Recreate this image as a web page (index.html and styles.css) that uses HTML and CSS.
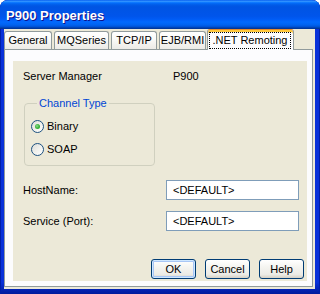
FILE: index.html
```html
<!DOCTYPE html>
<html>
<head>
<meta charset="utf-8">
<link rel="stylesheet" href="styles.css">
</head>
<body>
<div class="window">
  <div class="titlebar"><span class="title">P900 Properties</span></div>
  <div class="body">
    <div class="tabs">
      <div class="tab t-general">General</div>
      <div class="tab t-mq">MQSeries</div>
      <div class="tab t-tcp">TCP/IP</div>
      <div class="tab t-ejb">EJB/RMI</div>
      <div class="tab tab-active"><span class="focus">.NET Remoting</span></div>
    </div>
    <div class="page">
      <div class="inner">
        <div class="row-info">
          <span class="info-label">Server Manager</span>
          <span class="info-value">P900</span>
        </div>
        <fieldset class="group">
          <legend class="legend">Channel Type</legend>
          <div class="radio-row"><span class="radio checked"></span><span>Binary</span></div>
          <div class="radio-row second"><span class="radio"></span><span>SOAP</span></div>
        </fieldset>
        <div class="field-row host">
          <span class="field-label">HostName:</span>
          <div class="textbox">&lt;DEFAULT&gt;</div>
        </div>
        <div class="field-row port">
          <span class="field-label">Service (Port):</span>
          <div class="textbox">&lt;DEFAULT&gt;</div>
        </div>
        <div class="buttons">
          <div class="btn btn-default">OK</div>
          <div class="btn">Cancel</div>
          <div class="btn">Help</div>
        </div>
      </div>
    </div>
  </div>
</div>
</body>
</html>
```
FILE: styles.css
```css
* { box-sizing: border-box; }
html, body { margin: 0; padding: 0; }
body {
  width: 320px;
  height: 294px;
  overflow: hidden;
  font-family: "Liberation Sans", Arial, sans-serif;
  font-size: 11px;
  color: #000;
  background: #fff;
}
.window {
  width: 320px;
  height: 294px;
  display: flex;
  flex-direction: column;
  background: linear-gradient(to bottom, #0831D9 0%, #0831D9 96%, #001B9C 100%);
  box-shadow: inset 1px 0 #001EA8, inset -1px 0 #001EA8;
  border-radius: 8px 8px 0 0;
  overflow: hidden;
}
.titlebar {
  height: 29px;
  flex: none;
  padding: 1px 0 0 6px;
  line-height: 29px;
  background: linear-gradient(to bottom,
    #0058EE 0%, #3593FF 4%, #288EFF 6%, #127DFF 8%, #036FFC 10%,
    #0262EE 14%, #0057E5 20%, #0054E3 24%, #0055EB 56%, #005BF5 66%,
    #026AFE 76%, #0062EF 86%, #0052D6 92%, #0040AB 96%, #003092 100%);
  overflow: hidden;
}
.title {
  color: #fff;
  font-weight: bold;
  font-size: 13px;
  text-shadow: 1px 1px #0F1089;
}
.body {
  flex: 1;
  margin: 0 5px 5px 4px;
  padding: 0 2px 2px 0;
  background: #ECE9D8;
  display: flex;
  flex-direction: column;
}
.tabs {
  height: 20px;
  display: flex;
  align-items: flex-start;
  flex: none;
}
.tab {
  height: 18px;
  margin-top: 2px;
  margin-right: 2px;
  border: 1px solid #919B9C;
  border-bottom: none;
  border-radius: 3px 3px 0 0;
  background: linear-gradient(to bottom, #FFFFFF 0%, #FAFAF8 40%, #ECEBE6 100%);
  text-align: center;
  line-height: 17px;
  white-space: nowrap;
}
.t-general { width: 48px; }
.t-mq { width: 55px; }
.t-tcp { width: 46px; }
.t-ejb { width: 47px; margin-right: 1px; }
.tab-active {
  width: 87px;
  height: 21px;
  margin-top: 0;
  margin-bottom: -1px;
  position: relative;
  z-index: 2;
  background: #FCFCFE;
  border-top: 1px solid #E68B2C;
  box-shadow: inset 0 2px #FFC83C;
  padding: 2px 2px 1px 1px;
  line-height: 15px;
}
.focus {
  display: block;
  height: 17px;
  border: 1px dotted #000;
}
.page {
  flex: 1;
  border: 1px solid #919B9C;
  background: #FCFCFE;
  padding: 11px 5px 5px 8px;
  display: flex;
}
.inner {
  flex: 1;
  background: #ECE9D8;
  padding: 9px 3px 0 10px;
  display: flex;
  flex-direction: column;
}
.row-info {
  display: flex;
  height: 13px;
  line-height: 13px;
}
.info-label { width: 150px; }
.group {
  margin: 14px 0 0 1px;
  width: 131px;
  border: 1px solid #D0D0BF;
  border-radius: 4px;
  padding: 10px 0 9px 6px;
  min-width: 0;
}
.legend {
  color: #0046D5;
  line-height: 13px;
  padding: 0 2px;
  margin-left: 6px;
}
.radio-row {
  display: flex;
  align-items: center;
  height: 13px;
  line-height: 13px;
  gap: 3px;
}
.radio-row.second { margin-top: 10px; }
.radio {
  width: 13px;
  height: 13px;
  border-radius: 50%;
  border: 1px solid #1C5180;
  background: linear-gradient(135deg, #DCDCD7 0%, #F0F0EC 50%, #FFFFFF 100%);
  flex: none;
  display: flex;
  align-items: center;
  justify-content: center;
}
.radio.checked::after {
  content: "";
  width: 5px;
  height: 5px;
  border-radius: 50%;
  background: radial-gradient(circle at 40% 40%, #8FDC8F 0%, #3CB43C 50%, #21A121 100%);
}
.field-row {
  display: flex;
  align-items: center;
  height: 20px;
}
.field-row.host { margin-top: 14px; }
.field-row.port { margin-top: 11px; }
.field-label { width: 143px; }
.textbox {
  width: 133px;
  height: 20px;
  border: 1px solid #7F9DB9;
  background: #fff;
  padding-left: 6px;
  line-height: 18px;
}
.buttons {
  margin-top: 28px;
  display: flex;
  justify-content: flex-end;
  gap: 9px;
}
.btn {
  width: 45px;
  height: 20px;
  border: 1px solid #003C74;
  border-radius: 3px;
  background: linear-gradient(to bottom, #FFFFFF 0%, #F4F4F0 40%, #ECEBE6 80%, #D6D0C5 100%);
  text-align: center;
  line-height: 18px;
}
.btn-default {
  box-shadow: inset 0 0 0 1px #CEE7FF, inset 0 0 0 2px #A8C6F5;
}
```
